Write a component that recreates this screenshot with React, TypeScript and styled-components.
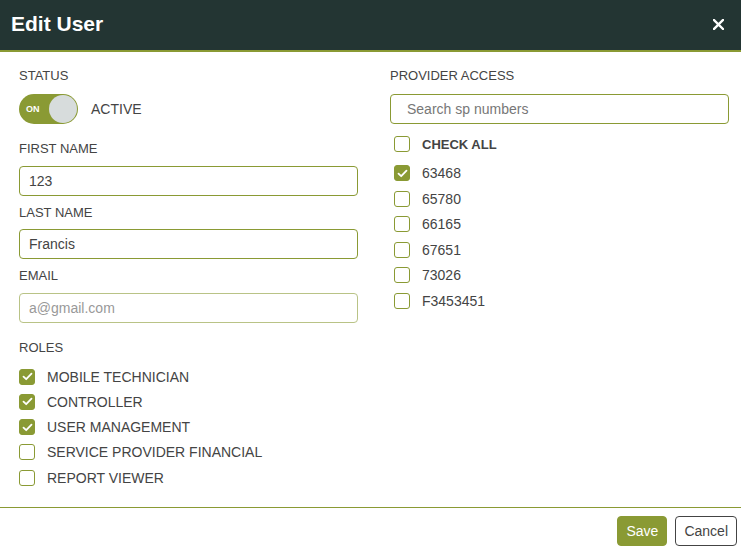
import React from "react";
import styled, { createGlobalStyle } from "styled-components";

const OLIVE = "#8a9a34";

const Global = createGlobalStyle`
  html, body { margin: 0; padding: 0; background: #fff; }
  body { font-family: "Liberation Sans", Arial, sans-serif; color: #444; }
  * { box-sizing: border-box; }
`;

const Modal = styled.div`
  width: 741px;
  height: 550px;
  display: flex;
  flex-direction: column;
  background: #fff;
`;

const Header = styled.header`
  height: 52px;
  background: #233533;
  border-bottom: 2px solid ${OLIVE};
  display: flex;
  align-items: center;
  justify-content: space-between;
  padding: 0 16px 0 11px;
  flex-shrink: 0;
`;

const Title = styled.h1`
  margin: 0;
  color: #fff;
  font-size: 21px;
  font-weight: bold;
  margin-top: -2px;
`;

const Close = styled.button`
  background: none;
  border: none;
  color: #fff;
  padding: 0;
  width: 14px;
  height: 14px;
  display: flex;
  align-items: center;
  justify-content: center;
  cursor: pointer;
  margin-top: -2px;
`;

const Body = styled.div`
  flex: 1;
  display: grid;
  grid-template-columns: 339px 339px;
  column-gap: 32px;
  padding: 16px 12px 0 19px;
`;

const Column = styled.div`
  display: flex;
  flex-direction: column;
`;

const Label = styled.div<{ $mt?: number }>`
  font-size: 13px;
  line-height: 16px;
  color: #444;
  margin-top: ${(p) => p.$mt ?? 0}px;
`;

const ToggleRow = styled.div`
  display: flex;
  align-items: center;
  gap: 13px;
  margin-top: 10px;
  font-size: 14px;
  color: #444;
`;

const Toggle = styled.div`
  width: 59px;
  height: 30px;
  border-radius: 15px;
  background: ${OLIVE};
  display: flex;
  align-items: center;
  justify-content: space-between;
  padding: 0 1px 0 7px;
`;

const ToggleText = styled.span`
  color: #fff;
  font-size: 9px;
  font-weight: bold;
`;

const Knob = styled.span`
  width: 28px;
  height: 28px;
  border-radius: 50%;
  background: #d7dcdc;
`;

const Input = styled.input<{ $light?: boolean }>`
  width: 100%;
  height: 30px;
  border: 1px solid ${(p) => (p.$light ? "#b9c386" : OLIVE)};
  border-radius: 4px;
  padding: 0 9px;
  font-family: "Liberation Sans", Arial, sans-serif;
  font-size: 14px;
  color: #444;
  outline: none;
  margin-top: 8.5px;
  &::placeholder { color: #999; }
`;

const SearchInput = styled(Input)`
  padding: 0 16px;
  margin-top: 10px;
  &::placeholder { color: #777; }
`;

const CheckList = styled.div<{ $mt: number; $gap: number }>`
  display: flex;
  flex-direction: column;
  gap: ${(p) => p.$gap}px;
  margin-top: ${(p) => p.$mt}px;
`;

const CheckRow = styled.label<{ $indent?: number; $bold?: boolean }>`
  display: flex;
  align-items: center;
  gap: 12px;
  height: 16px;
  padding-left: ${(p) => p.$indent ?? 0}px;
  font-size: ${(p) => (p.$bold ? 13 : 14)}px;
  font-weight: ${(p) => (p.$bold ? "bold" : "normal")};
  color: #444;
`;

const Box = styled.span<{ $on?: boolean }>`
  width: 16px;
  height: 16px;
  border-radius: 3px;
  border: 1px solid ${OLIVE};
  background: ${(p) => (p.$on ? OLIVE : "#fff")};
  display: flex;
  align-items: center;
  justify-content: center;
  flex-shrink: 0;
`;

const Footer = styled.footer`
  height: 43px;
  border-top: 1px solid ${OLIVE};
  display: flex;
  justify-content: flex-end;
  align-items: flex-start;
  gap: 8px;
  padding: 8px 4px 0 0;
  flex-shrink: 0;
`;

const Btn = styled.button<{ $primary?: boolean }>`
  height: 30px;
  border-radius: 4px;
  font-family: "Liberation Sans", Arial, sans-serif;
  font-size: 14px;
  padding: 0 8px;
  cursor: pointer;
  border: 1px solid ${(p) => (p.$primary ? OLIVE : "#444")};
  background: ${(p) => (p.$primary ? OLIVE : "#fff")};
  color: ${(p) => (p.$primary ? "#fff" : "#444")};
`;

const Check = ({ on }: { on?: boolean }) => (
  <Box $on={on}>
    {on && (
      <svg width="11" height="9" viewBox="0 0 11 9">
        <path d="M1.5 4.6 L4.2 7.2 L9.5 1.6" fill="none" stroke="#fff" strokeWidth="1.8" strokeLinecap="round" strokeLinejoin="round" />
      </svg>
    )}
  </Box>
);

const roles = [
  { name: "MOBILE TECHNICIAN", on: true },
  { name: "CONTROLLER", on: true },
  { name: "USER MANAGEMENT", on: true },
  { name: "SERVICE PROVIDER FINANCIAL", on: false },
  { name: "REPORT VIEWER", on: false },
];

const sps = [
  { name: "63468", on: true },
  { name: "65780", on: false },
  { name: "66165", on: false },
  { name: "67651", on: false },
  { name: "73026", on: false },
  { name: "F3453451", on: false },
];

export default function App() {
  return (
    <>
      <Global />
      <Modal>
        <Header>
          <Title>Edit User</Title>
          <Close aria-label="Close">
            <svg width="11" height="11" viewBox="0 0 11 11">
              <path d="M1 1 L10 10 M10 1 L1 10" stroke="#fff" strokeWidth="2.4" strokeLinecap="square" />
            </svg>
          </Close>
        </Header>
        <Body>
          <Column>
            <Label>STATUS</Label>
            <ToggleRow>
              <Toggle>
                <ToggleText>ON</ToggleText>
                <Knob />
              </Toggle>
              ACTIVE
            </ToggleRow>
            <Label $mt={17}>FIRST NAME</Label>
            <Input defaultValue="123" />
            <Label $mt={9}>LAST NAME</Label>
            <Input defaultValue="Francis" />
            <Label $mt={9}>EMAIL</Label>
            <Input $light placeholder="a@gmail.com" />
            <Label $mt={17}>ROLES</Label>
            <CheckList $mt={13} $gap={9.3}>
              {roles.map((r) => (
                <CheckRow key={r.name}>
                  <Check on={r.on} />
                  {r.name}
                </CheckRow>
              ))}
            </CheckList>
          </Column>
          <Column>
            <Label>PROVIDER ACCESS</Label>
            <SearchInput $light={false} placeholder="Search sp numbers" />
            <CheckList $mt={12} $gap={0}>
              <CheckRow $indent={4} $bold>
                <Check />
                CHECK ALL
              </CheckRow>
            </CheckList>
            <CheckList $mt={13} $gap={9.5}>
              {sps.map((s) => (
                <CheckRow key={s.name} $indent={4}>
                  <Check on={s.on} />
                  {s.name}
                </CheckRow>
              ))}
            </CheckList>
          </Column>
        </Body>
        <Footer>
          <Btn $primary>Save</Btn>
          <Btn>Cancel</Btn>
        </Footer>
      </Modal>
    </>
  );
}
